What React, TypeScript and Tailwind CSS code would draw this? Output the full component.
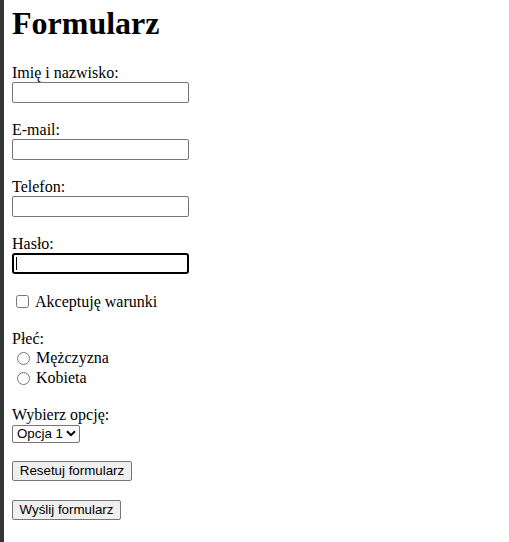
import React from "react";

const serif = { fontFamily: '"Liberation Serif", "Times New Roman", serif' };
const sans = '[font-family:"Liberation_Sans",Arial,sans-serif]';

function TextField({ focused = false, type = "text" }: { focused?: boolean; type?: string }) {
  if (focused) {
    return (
      <div className="relative h-[21px] w-[177px] rounded-[3px] border-2 border-black bg-white">
        <span className="absolute left-[2px] top-[2px] h-[13px] w-[1px] bg-black" />
      </div>
    );
  }
  return (
    <input
      type={type}
      className="block h-[21px] w-[177px] rounded-[2px] border border-[#767676] bg-white px-[2px] text-[13.33px] outline-none"
    />
  );
}

function Field({ label, type, focused, last }: { label: string; type?: string; focused?: boolean; last?: boolean }) {
  return (
    <div className={last ? "" : "mb-[16px]"}>
      <label className="block h-[20px] leading-[22px]">{label}</label>
      <TextField type={type} focused={focused} />
    </div>
  );
}

export default function App() {
  return (
    <div className="flex min-h-[542px] bg-white text-black" style={serif}>
      <div className="w-[4px] shrink-0 bg-[#353535]" />
      <div className="flex flex-col pl-[8px] pt-[5px] text-[16px]">
        <h1 className="mb-[20px] h-[37px] text-[32px] font-bold leading-[37px]">Formularz</h1>
        <Field label="Imię i nazwisko:" />
        <Field label="E-mail:" type="email" />
        <Field label="Telefon:" type="tel" />
        <Field label="Hasło:" type="password" focused last />

        <label className="mt-[18px] flex h-[19px] items-start leading-[19px]">
          <input type="checkbox" className="ml-[4px] mr-[6px] mt-[3px] h-[13px] w-[13px]" />
          <span>Akceptuję warunki</span>
        </label>

        <div className="mt-[19px] h-[18px] leading-[18px]">Płeć:</div>
        <label className="flex h-[20px] items-start leading-[20px]">
          <input type="radio" name="plec" className="ml-[5px] mr-[6px] mt-[4px] h-[13px] w-[13px]" />
          <span>Mężczyzna</span>
        </label>
        <label className="flex h-[20px] items-start leading-[20px]">
          <input type="radio" name="plec" className="ml-[5px] mr-[6px] mt-[4px] h-[13px] w-[13px]" />
          <span>Kobieta</span>
        </label>

        <div className="mt-[18px] h-[18px] leading-[18px]">Wybierz opcję:</div>
        <div className={`relative mt-[1px] h-[18px] w-[68px] ${sans}`}>
          <select className="block h-[18px] w-[68px] appearance-none rounded-[2px] border border-[#767676] bg-white pl-[4px] text-[13.33px] leading-[16px] text-black outline-none">
            <option>Opcja 1</option>
            <option>Opcja 2</option>
          </select>
          <svg
            className="pointer-events-none absolute right-[4px] top-[5px]"
            width="10"
            height="7"
            viewBox="0 0 10 7"
          >
            <path d="M1 1.2 L5 5.2 L9 1.2" fill="none" stroke="black" strokeWidth="2" />
          </svg>
        </div>

        <button
          type="reset"
          className={`mt-[18px] h-[20px] w-[120px] rounded-[2px] border border-[#767676] bg-[#efefef] text-center text-[13.33px] leading-[18px] text-black ${sans}`}
        >
          Resetuj formularz
        </button>
        <button
          type="submit"
          className={`mt-[19px] h-[20px] w-[109px] rounded-[2px] border border-[#767676] bg-[#efefef] text-center text-[13.33px] leading-[18px] text-black ${sans}`}
        >
          Wyślij formularz
        </button>
      </div>
    </div>
  );
}
